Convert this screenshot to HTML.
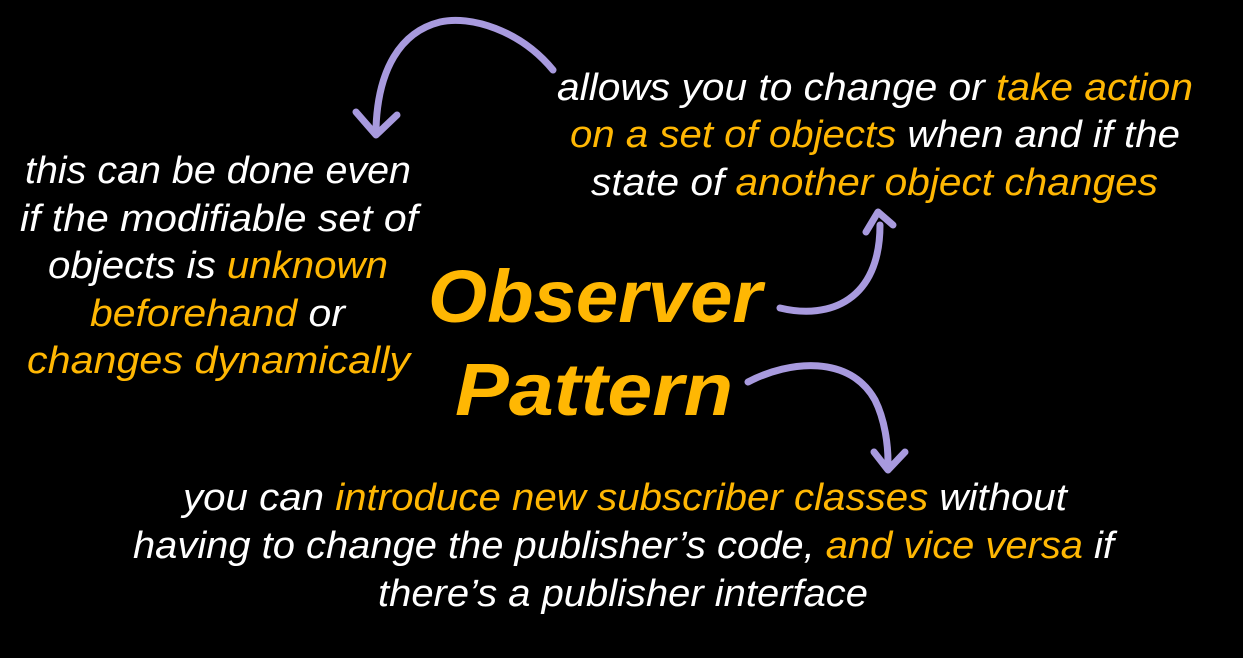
<!DOCTYPE html>
<html><head><meta charset="utf-8"><style>
html,body{margin:0;padding:0;background:#000;width:1243px;height:658px;overflow:hidden}
svg{display:block}
text{font-family:"Liberation Sans",sans-serif;font-style:italic;fill:#fff;font-size:38px}
.o{fill:#ffb703}
.t{font-weight:bold;font-size:74px;fill:#ffb703}
</style></head><body>
<svg width="1243" height="658" viewBox="0 0 1243 658">
<g fill="none" stroke="#a89ade" stroke-width="7" stroke-linecap="round" stroke-linejoin="round">
<path d="M553 70 C520 30 470 15 440 22 C400 32 378 70 376 128"/>
<path d="M356 112 L376 135 L397 115"/>
<path d="M780 308 C830 320 880 300 880 225"/>
<path d="M866 232 L878 212 L893 225"/>
<path d="M748 382 C790 360 850 355 875 400 C885 420 888 445 888 462"/>
<path d="M874 452 L888 470 L905 452"/>
</g>
<text x="557" y="100" textLength="636" lengthAdjust="spacingAndGlyphs">allows you to change or <tspan class="o">take action</tspan></text>
<text x="570" y="147" textLength="610" lengthAdjust="spacingAndGlyphs"><tspan class="o">on a set of objects</tspan> when and if the</text>
<text x="591" y="195" textLength="567" lengthAdjust="spacingAndGlyphs">state of <tspan class="o">another object changes</tspan></text>
<text x="25" y="183" textLength="386" lengthAdjust="spacingAndGlyphs">this can be done even</text>
<text x="20" y="231" textLength="398" lengthAdjust="spacingAndGlyphs">if the modifiable set of</text>
<text x="48" y="278" textLength="340" lengthAdjust="spacingAndGlyphs">objects is <tspan class="o">unknown</tspan></text>
<text x="90" y="326" textLength="255" lengthAdjust="spacingAndGlyphs"><tspan class="o">beforehand</tspan> or</text>
<text x="27" y="373" textLength="383" lengthAdjust="spacingAndGlyphs" class="o">changes dynamically</text>
<text x="428" y="322" textLength="334" lengthAdjust="spacingAndGlyphs" class="t">Observer</text>
<text x="455" y="415" textLength="278" lengthAdjust="spacingAndGlyphs" class="t">Pattern</text>
<text x="183" y="510" textLength="884" lengthAdjust="spacingAndGlyphs">you can <tspan class="o">introduce new subscriber classes</tspan> without</text>
<text x="133" y="558" textLength="981" lengthAdjust="spacingAndGlyphs">having to change the publisher’s code, <tspan class="o">and vice versa</tspan> if</text>
<text x="378" y="606" textLength="490" lengthAdjust="spacingAndGlyphs">there’s a publisher interface</text>
</svg>
</body></html>
